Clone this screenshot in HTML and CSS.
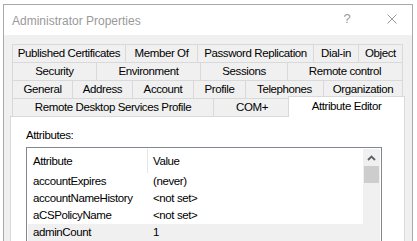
FILE: index.html
```html
<!DOCTYPE html>
<html lang="en">
<head>
  <meta charset="UTF-8" />
  <title>Administrator Properties</title>
  <link rel="stylesheet" href="styles.css">
</head>
<body>
  <div class="window">
    <div class="titlebar">
      <span class="title">Administrator Properties</span>
      <span class="help">?</span>
      <span class="close">
        <svg width="10" height="10" viewBox="0 0 10 10"><path d="M0.5 0.5L9.5 9.5M9.5 0.5L0.5 9.5" stroke="#999" stroke-width="1" fill="none"/></svg>
      </span>
    </div>

    <div class="dialog-body">
      <div class="tabs">
        <div class="tab-row row-1">
          <div class="tab">Published Certificates</div>
          <div class="tab">Member Of</div>
          <div class="tab">Password Replication</div>
          <div class="tab">Dial-in</div>
          <div class="tab">Object</div>
        </div>
        <div class="tab-row row-2">
          <div class="tab">Security</div>
          <div class="tab">Environment</div>
          <div class="tab">Sessions</div>
          <div class="tab">Remote control</div>
        </div>
        <div class="tab-row row-3">
          <div class="tab">General</div>
          <div class="tab">Address</div>
          <div class="tab">Account</div>
          <div class="tab">Profile</div>
          <div class="tab">Telephones</div>
          <div class="tab">Organization</div>
        </div>
        <div class="tab-row row-4">
          <div class="tab">Remote Desktop Services Profile</div>
          <div class="tab">COM+</div>
          <div class="tab active">Attribute Editor</div>
        </div>
      </div>

      <div class="panel">
        <div class="label">Attributes:</div>
        <div class="listbox">
          <div class="list">
            <div class="list-head">
              <span class="col-name">Attribute</span>
              <span class="col-value">Value</span>
            </div>
            <div class="list-row">
              <span class="col-name">accountExpires</span>
              <span class="col-value">(never)</span>
            </div>
            <div class="list-row">
              <span class="col-name">accountNameHistory</span>
              <span class="col-value">&lt;not set&gt;</span>
            </div>
            <div class="list-row">
              <span class="col-name">aCSPolicyName</span>
              <span class="col-value">&lt;not set&gt;</span>
            </div>
            <div class="list-row selected">
              <span class="col-name">adminCount</span>
              <span class="col-value">1</span>
            </div>
          </div>
          <div class="scrollbar">
            <div class="scroll-up">
              <svg width="9" height="6" viewBox="0 0 9 6"><polyline points="1,5 4.5,1.5 8,5" stroke="#606060" stroke-width="1.8" fill="none"/></svg>
            </div>
            <div class="thumb"></div>
          </div>
        </div>
      </div>
    </div>
  </div>
</body>
</html>
```

FILE: styles.css
```css
html,
body {
  margin: 0;
  background-color: white;
  overflow: hidden;
}

body {
  font-family: 'Liberation Sans', Arial, sans-serif;
  color: #000;
}

/* dialog runs off the bottom of the shot, so clip it there */
.window {
  margin: 4px 0 0 3px;
  width: 410px;
  height: 237px;
  box-sizing: border-box;
  border: 1px solid #aaaaaa;
  border-bottom: none;
  background-color: #f0f0f0;
  overflow: hidden;
}

.titlebar {
  display: flex;
  align-items: center;
  height: 30px;
  background-color: white;
}

.title {
  flex: 1;
  padding: 1px 0 0 8px;
  font-size: 12px;
  color: #999;
}

.help {
  width: 50px;
  padding-bottom: 3px;
  text-align: center;
  font-size: 13px;
  color: #999;
}

.close {
  width: 40px;
  padding-bottom: 3px;
  display: flex;
  justify-content: center;
}

.dialog-body {
  padding: 9px 7px 0 6px;
}

.tabs {
  margin: 0 2px;
}

.tab-row {
  display: grid;
  height: 18px;
}

.row-1 {
  grid-template-columns: 113px 72px 116px 45px 45px;
}

.row-2 {
  grid-template-columns: 84px 104px 87px 116px;
}

.row-3 {
  grid-template-columns: 60px 60px 61px 52px 78px 80px;
}

.row-4 {
  grid-template-columns: 201px 77px 113px;
}

.tab {
  border-top: 1px solid #d9d9d9;
  border-left: 1px solid #d9d9d9;
  text-align: center;
  line-height: 17px;
  font-size: 11.5px;
  letter-spacing: -0.4px;
  white-space: nowrap;
}

.tab:last-child {
  border-right: 1px solid #d9d9d9;
}

.tab.active {
  position: relative;
  z-index: 1;
  margin: -2px -2px -1px;
  background-color: white;
  line-height: 19px;
}

.panel {
  height: 120px;
  padding: 10px 0 0 15px;
  background-color: white;
  border: 1px solid #d9d9d9;
  border-bottom: none;
}

.label {
  line-height: 16px;
  margin-bottom: 4px;
  font-size: 11.5px;
  letter-spacing: -0.4px;
}

.listbox {
  display: flex;
  width: 356px;
  height: 100px;
  box-sizing: border-box;
  padding: 1px;
  border: 1px solid #828790;
  font-size: 11.5px;
  letter-spacing: -0.4px;
}

.list {
  flex: 1;
}

.list-head {
  display: flex;
  height: 24px;
  line-height: 24px;
}

.list-row {
  display: flex;
  height: 17px;
  line-height: 17px;
}

.list-row.selected {
  background-color: #f0f0f0;
}

.col-name {
  width: 120px;
  box-sizing: border-box;
  padding-left: 5px;
  white-space: nowrap;
}

.list-head .col-name {
  border-right: 1px solid #e5e5e5;
}

.col-value {
  padding-left: 5px;
  white-space: nowrap;
}

.scrollbar {
  width: 17px;
  background-color: #f0f0f0;
}

.scroll-up {
  height: 17px;
  display: flex;
  align-items: center;
  justify-content: center;
}

.thumb {
  height: 17px;
  margin: 0 1px;
  background-color: #cdcdcd;
}
```
